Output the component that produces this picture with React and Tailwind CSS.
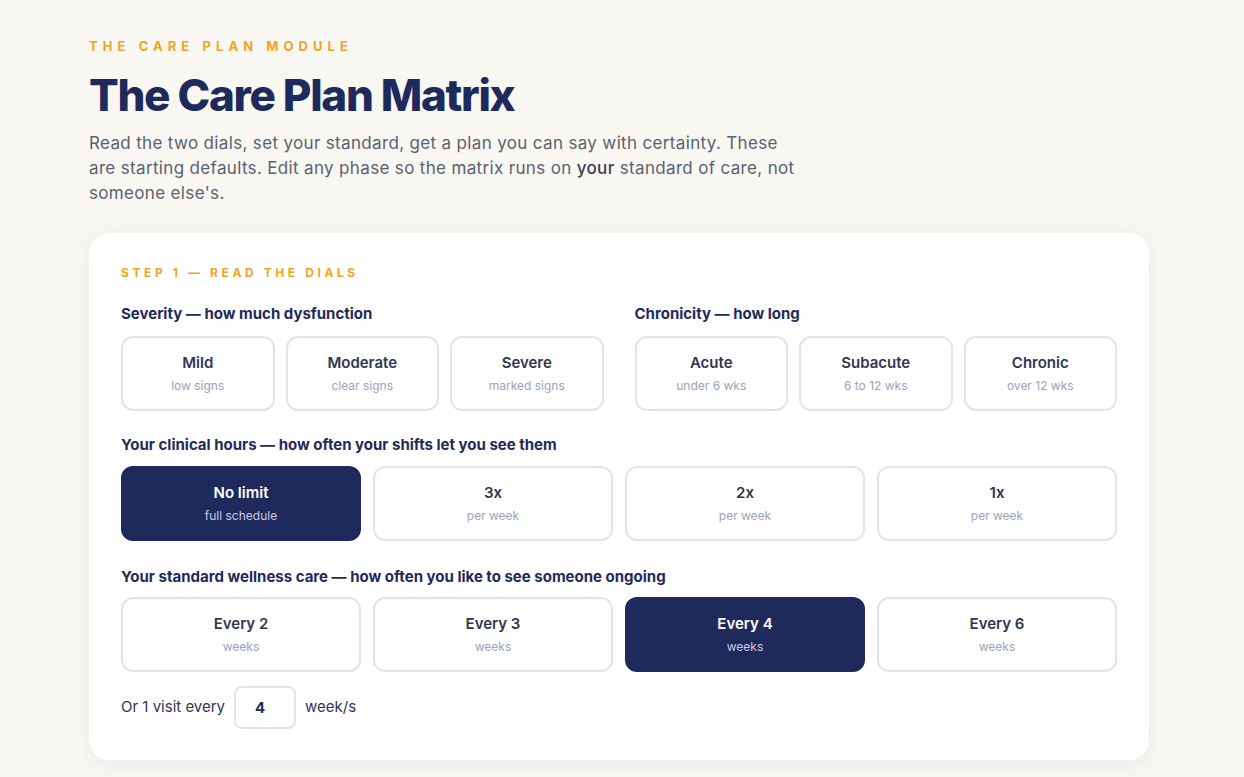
import { useState } from 'react'

const severity = [
  { t: 'Mild', s: 'low signs' },
  { t: 'Moderate', s: 'clear signs' },
  { t: 'Severe', s: 'marked signs' },
]

const chronicity = [
  { t: 'Acute', s: 'under 6 wks' },
  { t: 'Subacute', s: '6 to 12 wks' },
  { t: 'Chronic', s: 'over 12 wks' },
]

const hours = [
  { t: 'No limit', s: 'full schedule' },
  { t: '3x', s: 'per week' },
  { t: '2x', s: 'per week' },
  { t: '1x', s: 'per week' },
]

const wellness = [
  { t: 'Every 2', s: 'weeks', n: 2 },
  { t: 'Every 3', s: 'weeks', n: 3 },
  { t: 'Every 4', s: 'weeks', n: 4 },
  { t: 'Every 6', s: 'weeks', n: 6 },
]

function Option({ title, sub, active, onClick }) {
  return (
    <button
      onClick={onClick}
      className={`h-[75px] rounded-xl border-2 flex flex-col items-center justify-center gap-[5px] ${
        active ? 'bg-[#1f2a5c] border-[#1f2a5c]' : 'bg-white border-[#e0e4f0]'
      }`}
    >
      <span className={`text-[15px] leading-5 font-semibold ${active ? 'text-white' : 'text-[#2f3650]'}`}>{title}</span>
      <span className={`text-[12px] leading-4 ${active ? 'text-[#c9cde2]' : 'text-[#9ca2ba]'}`}>{sub}</span>
    </button>
  )
}

function Label({ children }) {
  return <p className="text-[15px] leading-5 font-bold text-[#1f2a5c]">{children}</p>
}

export default function App() {
  const [sev, setSev] = useState(null)
  const [chr, setChr] = useState(null)
  const [hr, setHr] = useState(0)
  const [weeks, setWeeks] = useState(4)

  return (
    <div className="min-h-screen bg-[#f8f7f2] font-['Inter',sans-serif] pt-[38px] pb-10">
      <div className="ml-[89px] w-[1060px]">
        <p className="text-[13px] leading-4 font-bold tracking-[0.39em] text-[#eea51f]">THE CARE PLAN MODULE</p>
        <h1 className="mt-[15px] text-[44px] leading-[52px] font-extrabold tracking-[-0.03em] text-[#1f2a5c]">
          The Care Plan Matrix
        </h1>
        <p className="mt-[10px] max-w-[780px] text-[17px] leading-[25px] tracking-[0.02em] text-[#5b6072]">
          Read the two dials, set your standard, get a plan you can say with certainty. These
          <br />
          are starting defaults. Edit any phase so the matrix runs on{' '}
          <span className="text-[#3b4052] font-medium">your</span> standard of care, not
          <br />
          someone else's.
        </p>

        <div className="mt-[27px] bg-white rounded-[20px] shadow-[0_4px_20px_rgba(30,35,60,0.06)] px-8 pt-[32px] pb-[31px]">
          <p className="text-[12px] leading-4 font-bold tracking-[0.3em] text-[#eea51f]">STEP 1 — READ THE DIALS</p>

          <div className="mt-[23px] grid grid-cols-2 gap-[31px]">
            <div>
              <Label>Severity — how much dysfunction</Label>
              <div className="mt-[12px] grid grid-cols-3 gap-[11px]">
                {severity.map((o, i) => (
                  <Option key={o.t} title={o.t} sub={o.s} active={sev === i} onClick={() => setSev(i)} />
                ))}
              </div>
            </div>
            <div>
              <Label>Chronicity — how long</Label>
              <div className="mt-[12px] grid grid-cols-3 gap-[11px]">
                {chronicity.map((o, i) => (
                  <Option key={o.t} title={o.t} sub={o.s} active={chr === i} onClick={() => setChr(i)} />
                ))}
              </div>
            </div>
          </div>

          <div className="mt-[24px]">
            <Label>Your clinical hours — how often your shifts let you see them</Label>
            <div className="mt-[11px] grid grid-cols-4 gap-3">
              {hours.map((o, i) => (
                <Option key={o.t} title={o.t} sub={o.s} active={hr === i} onClick={() => setHr(i)} />
              ))}
            </div>
          </div>

          <div className="mt-[26px]">
            <Label>Your standard wellness care — how often you like to see someone ongoing</Label>
            <div className="mt-[10px] grid grid-cols-4 gap-3">
              {wellness.map((o) => (
                <Option key={o.t} title={o.t} sub={o.s} active={weeks === o.n} onClick={() => setWeeks(o.n)} />
              ))}
            </div>
          </div>

          <div className="mt-[14px] flex items-center gap-[9px] text-[15px] text-[#2f3650]">
            <span>Or 1 visit every</span>
            <input
              value={weeks}
              onChange={(e) => setWeeks(Number(e.target.value) || '')}
              className="w-[62px] h-[43px] rounded-lg border-2 border-[#e0e4f0] px-[19px] text-[15px] font-bold text-[#1f2a5c] outline-none"
            />
            <span>week/s</span>
          </div>
        </div>
      </div>
    </div>
  )
}
